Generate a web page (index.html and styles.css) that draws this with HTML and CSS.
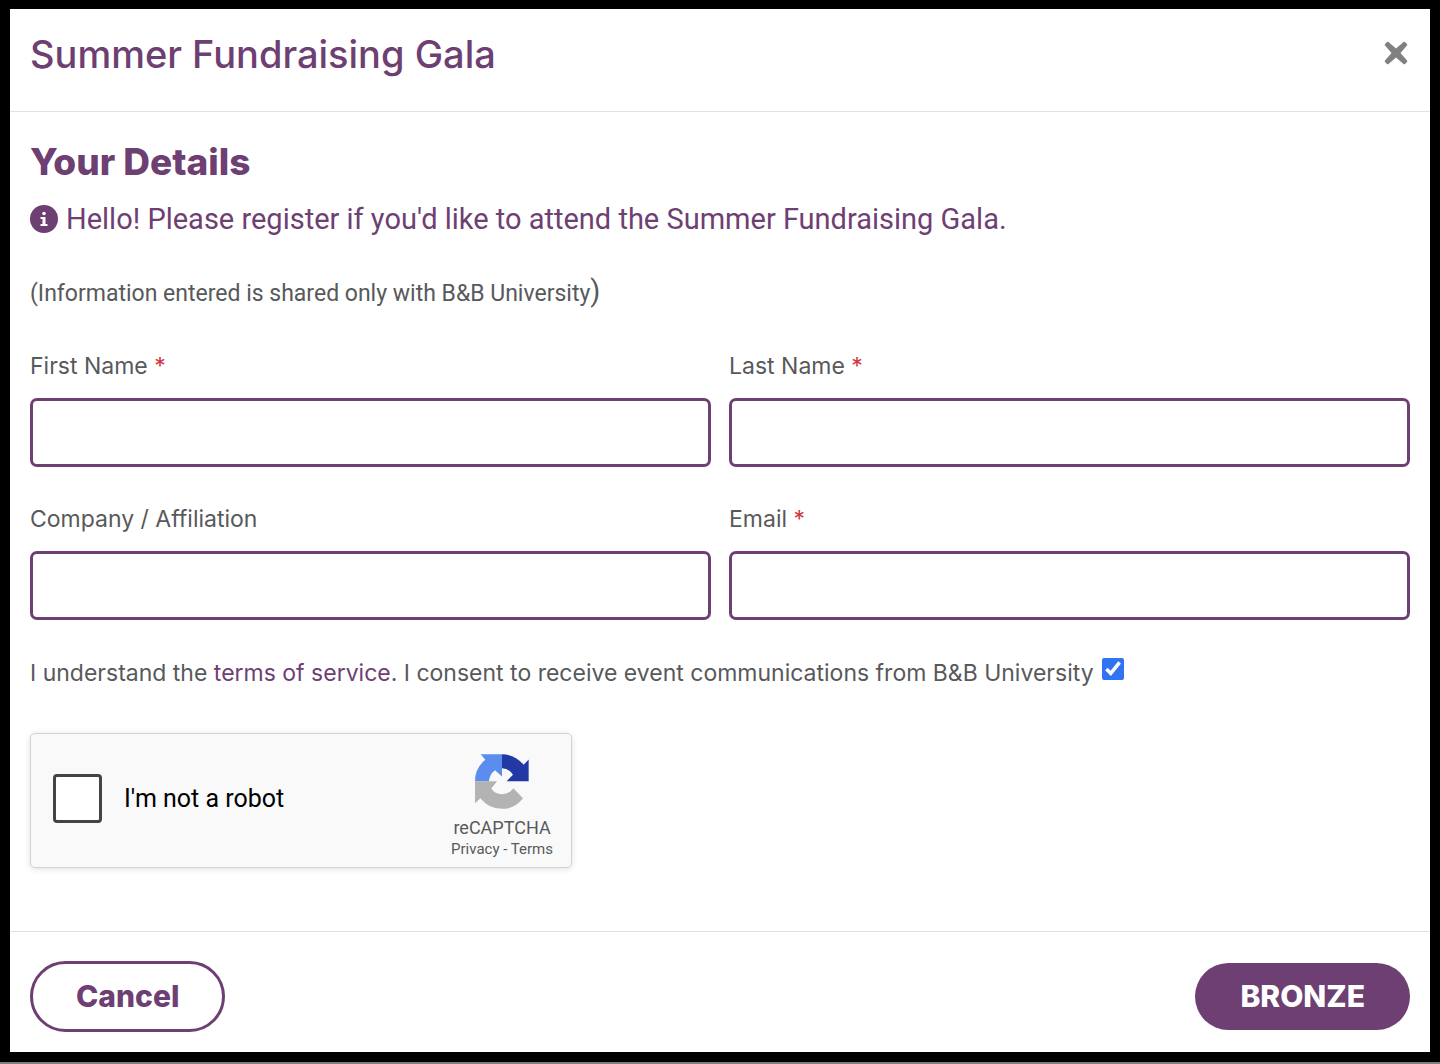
FILE: index.html
```html
<!DOCTYPE html>
<html lang="en">
<head>
  <meta charset="UTF-8" />
  <meta name="viewport" content="width=device-width, initial-scale=1.0"/>
  <title>Summer Fundraising Gala</title>
  <link rel="stylesheet" href="styles.css">
</head>
<body>
  <form class="modal" role="dialog" aria-labelledby="modal-title">
    <header class="modal-header">
      <h1 id="modal-title">Summer Fundraising Gala</h1>
      <button type="button" class="close" aria-label="Close">
        <svg viewBox="0 0 24 24" width="24" height="24" aria-hidden="true">
          <path fill="#808080" d="M4.500 1 12 7.500 19.500 1q.8-.6 1.500 0l2 2q.6.700 0 1.500L16.500 12l6.500 7.500q.6.800 0 1.500l-2 2q-.7.600-1.500 0L12 16.500 4.500 23q-.8.600-1.500 0l-2-2q-.6-.7 0-1.500L7.500 12 1 4.500Q.4 3.700 1 3l2-2q.7-.6 1.500 0z"/>
        </svg>
      </button>
    </header>

    <main class="modal-body">
      <h2>Your Details</h2>
      <p class="intro">
        <svg viewBox="0 0 28 28" width="28" height="28" aria-hidden="true">
          <circle cx="14" cy="14" r="14" fill="#6e3f72"/>
          <circle cx="14" cy="8.500" r="1.800" fill="#fff"/>
          <path fill="#fff" d="M10.500 12H15.500v7h2v2h-7v-2h2v-5h-2z"/>
        </svg>
        Hello! Please register if you'd like to attend the Summer Fundraising Gala.
      </p>
      <p class="privacy">(Information entered is shared only with B&amp;B University<span class="paren">)</span></p>

      <div class="fields">
        <div class="field">
          <label for="first-name">First Name <span class="required">*</span></label>
          <input type="text" id="first-name" required>
        </div>
        <div class="field">
          <label for="last-name">Last Name <span class="required">*</span></label>
          <input type="text" id="last-name" required>
        </div>
        <div class="field">
          <label for="company">Company / Affiliation</label>
          <input type="text" id="company">
        </div>
        <div class="field">
          <label for="email">Email <span class="required">*</span></label>
          <input type="email" id="email" required>
        </div>
      </div>

      <div class="consent">
        <label for="consent">I understand the <a href="#">terms of service</a>. I consent to receive event communications from B&amp;B University</label>
        <input type="checkbox" id="consent" checked>
      </div>

      <div class="captcha">
        <input type="checkbox" id="robot">
        <label for="robot">I'm not a robot</label>
        <div class="captcha-brand">
          <svg viewBox="0 0 162 164" width="54" height="55" aria-hidden="true">
            <path fill="#5b8def" d="M81 0H17l14 17A82 82 0 0 0 0 81h42q1-20 18-33l21 19z"/>
            <path fill="#2138a5" d="M81 0q39 1 65 32l15-16v65H95l19-19Q101 42 81 42z"/>
            <path fill="#b3b3b3" d="M0 81h66L49 103q10 17 32 17 22 0 34-18l29 30q-25 32-63 32-39 0-65-32L0 148z"/>
          </svg>
          <span class="captcha-name">reCAPTCHA</span>
          <span class="captcha-links"><a href="#">Privacy</a> - <a href="#">Terms</a></span>
        </div>
      </div>
    </main>

    <footer class="modal-footer">
      <button type="button" class="btn btn-outline">Cancel</button>
      <button type="submit" class="btn btn-solid">BRONZE</button>
    </footer>
  </form>
</body>
</html>
```

FILE: styles.css
```css
* {
  box-sizing: border-box;
}
body {
  margin: 0;
  min-height: 100vh;
  background: #7f7f7f;
  color: #58595b;
  font-family: Roboto, sans-serif;
  font-size: 24px;
}
h1, h2, p {
  margin: 0;
}
a {
  color: #6e3f72;
  text-decoration: none;
}
.modal {
  background: #fff;
  border: 10px solid #000;
  border-top-width: 9px;
}
.modal-header {
  display: flex;
  justify-content: space-between;
  align-items: flex-start;
  padding: 20px 20px 32px;
  border-bottom: 1px solid #dee2e6;
}
h1, h2 {
  font-family: Inter, sans-serif;
  color: #6e3f72;
  line-height: 50px;
}
h1 {
  font-size: 38px;
  font-weight: 500;
}
h2 {
  font-size: 37px;
  font-weight: 800;
}
.close {
  display: flex;
  margin: 12px 2px;
  padding: 0;
  background: none;
  border: none;
  cursor: pointer;
}
.modal-body {
  padding: 25px 20px 63px;
}
.intro {
  display: flex;
  align-items: center;
  gap: 8px;
  margin-top: 12px;
  font-size: 29px;
  line-height: 40px;
  color: #6e3f72;
}
.privacy {
  margin-top: 32px;
  font-size: 23px;
  line-height: 40px;
}
.paren {
  font-size: 29px;
}
.fields {
  display: grid;
  grid-template-columns: 1fr 1fr;
  gap: 36px 18px;
  margin-top: 36px;
}
.field label {
  display: block;
  margin-bottom: 16px;
}
.field label, .consent {
  font-family: Inter, sans-serif;
  font-size: 23px;
  line-height: 32px;
}
.required {
  color: #cb3a40;
}
.field input {
  display: block;
  width: 100%;
  height: 69px;
  padding: 0 16px;
  font: inherit;
  border: 3px solid #6e3f72;
  border-radius: 7px;
}
.consent {
  display: flex;
  gap: 8px;
  margin-top: 37px;
}
.consent input {
  width: 22px;
  height: 22px;
  margin: 1px 0;
  accent-color: #3074f3;
}
.captcha {
  display: flex;
  align-items: center;
  max-width: 542px;
  margin-top: 44px;
  padding: 16px 18px 8px 22px;
  background: #f9f9f9;
  border: 1px solid #d3d3d3;
  border-radius: 5px;
  box-shadow: 0 1px 6px rgba(0,0,0,0.12);
}
.captcha input {
  appearance: none;
  width: 49px;
  height: 49px;
  margin: 0 22px 12px 0;
  background: #fff;
  border: 3px solid #444;
  border-radius: 4px;
}
.captcha input:checked {
  background: #3074f3;
}
.captcha label {
  margin-bottom: 12px;
  font-size: 25px;
  color: #000;
}
.captcha-brand {
  display: flex;
  flex-direction: column;
  align-items: center;
  margin-left: auto;
  padding-top: 4px;
}
.captcha-name {
  margin-top: 8px;
  font-size: 18px;
  line-height: 22px;
}
.captcha-links {
  font-size: 15px;
  line-height: 20px;
}
.captcha-links a {
  color: inherit;
}
.modal-footer {
  display: flex;
  justify-content: space-between;
  align-items: center;
  padding: 29px 20px 20px;
  border-top: 1px solid #dee2e6;
}
.btn {
  height: 67px;
  padding: 0 45px 2px;
  font-family: Inter, sans-serif;
  font-size: 30px;
  font-weight: 800;
  border: none;
  border-radius: 36px;
  cursor: pointer;
}
.btn-outline {
  height: 71px;
  padding: 0 43px 2px;
  color: #6e3f72;
  background: #fff;
  border: 3px solid #6e3f72;
}
.btn-solid {
  color: #fff;
  background: #6e3f72;
}
```
